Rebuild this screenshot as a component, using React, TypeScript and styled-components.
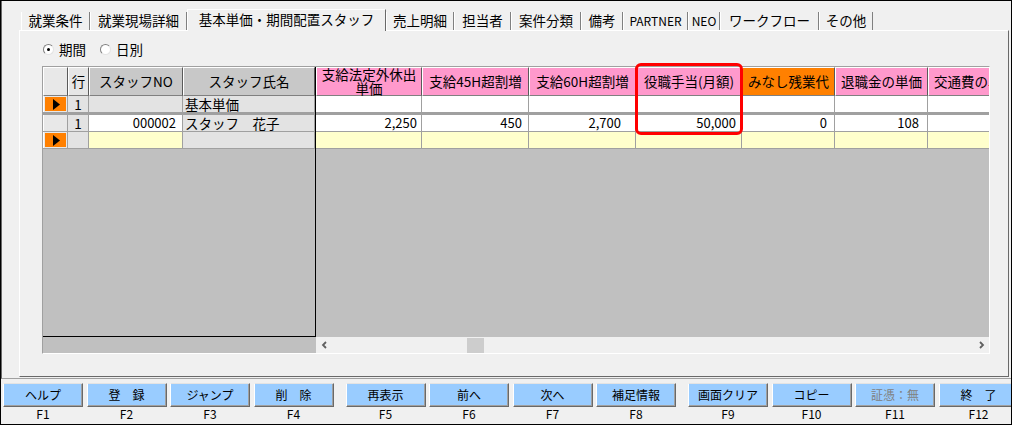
import styled, { createGlobalStyle } from 'styled-components'

const PINK = '#ff99cc'
const ORANGE = '#ff8000'
const GRAY_CELL = '#e3e3e3'
const YELLOW = '#ffffcc'

const GlobalStyle = createGlobalStyle`
  html, body {
    margin: 0;
    padding: 0;
    background: #ffffff;
  }
  body {
    font-family: "Noto Sans CJK JP", "Liberation Sans", sans-serif;
    font-size: 13.5px;
    color: #000;
  }
  * {
    box-sizing: border-box;
  }
`

const Window = styled.div`
  width: 1012px;
  height: 425px;
  border: 1px solid #000;
  background: #f0f0f0;
  display: flex;
  flex-direction: column;
  overflow: hidden;
`

const TopFrame = styled.div`
  height: 378px;
  flex-shrink: 0;
  border-left: 1px solid #696969;
  border-bottom: 1px solid #a0a0a0;
  padding-left: 17px;
  display: flex;
  flex-direction: column;
`

const TabStrip = styled.div`
  height: 29px;
  display: flex;
  align-items: flex-end;
  padding-left: 2px;
`

const Tab = styled.div<{ $w: number; $active?: boolean; $latin?: boolean }>`
  width: ${(p) => p.$w}px;
  height: ${(p) => (p.$active ? 22 : 18)}px;
  margin-bottom: ${(p) => (p.$active ? -1 : 0)}px;
  position: relative;
  z-index: ${(p) => (p.$active ? 1 : 0)};
  background: #f0f0f0;
  border-left: 1px solid #ffffff;
  border-right: 1px solid ${(p) => (p.$active ? '#696969' : '#808080')};
  border-top: ${(p) => (p.$active ? '1px solid #ffffff' : 'none')};
  display: flex;
  align-items: center;
  justify-content: center;
  white-space: nowrap;
  font-size: ${(p) => (p.$latin ? 12 : 13.5)}px;
  line-height: 1;
  padding-bottom: ${(p) => (p.$active ? 2 : 0)}px;
`

const Panel = styled.div`
  width: 990px;
  height: 347px;
  border: 1px solid;
  border-color: #ffffff #696969 #696969 #ffffff;
  padding: 9px 0 0 22px;
  display: flex;
  flex-direction: column;
`

const RadioRow = styled.div`
  height: 19px;
  display: flex;
  align-items: center;
  gap: 14px;
  padding-left: 1px;
`

const RadioItem = styled.label`
  display: flex;
  align-items: center;
  gap: 5px;
  line-height: 1;
`

const RadioDot = styled.span<{ $checked?: boolean }>`
  width: 11px;
  height: 11px;
  border-radius: 50%;
  border: 1px solid;
  border-color: #808080 #e3e3e3 #e3e3e3 #808080;
  background: #ffffff;
  display: flex;
  align-items: center;
  justify-content: center;

  &::after {
    content: '';
    width: 3px;
    height: 3px;
    border-radius: 50%;
    background: ${(p) => (p.$checked ? '#000' : 'transparent')};
  }
`

const Grid = styled.div`
  margin-top: 7px;
  width: 948px;
  height: 288px;
  border: 1px solid;
  border-color: #a0a0a0 #ffffff #ffffff #a0a0a0;
  background: #c0c0c0;
  position: relative;
  display: flex;
  flex-direction: column;
`

const GridBody = styled.div`
  height: 270px;
  flex-shrink: 0;
  display: flex;
`

const FrozenPane = styled.div`
  width: 273px;
  flex-shrink: 0;
  border-right: 1px solid #000;
  border-bottom: 1px solid #000;
  display: flex;
  flex-direction: column;
`

const ScrollPane = styled.div`
  flex: 1;
  min-width: 0;
  overflow: hidden;
  display: flex;
  flex-direction: column;
`

const HeaderRow = styled.div`
  height: 29px;
  flex-shrink: 0;
  display: flex;
`

const HeadCell = styled.div<{ $w: number; $bg: string }>`
  width: ${(p) => p.$w}px;
  flex-shrink: 0;
  background: ${(p) => p.$bg};
  border-top: 1px solid #ffffff;
  border-left: 1px solid #ffffff;
  border-right: 1px solid #5a5a5a;
  border-bottom: 1px solid #808080;
  display: flex;
  align-items: center;
  justify-content: center;
  text-align: center;
  white-space: nowrap;
  line-height: 13.5px;
`

const HeadLines = styled.span`
  display: flex;
  flex-direction: column;
  align-items: center;
`

const DataRow = styled.div<{ $thick?: boolean }>`
  height: ${(p) => (p.$thick ? 19 : 17)}px;
  flex-shrink: 0;
  display: flex;
  border-bottom: ${(p) => (p.$thick ? 3 : 1)}px solid #a0a0a0;
`

const Cell = styled.div<{ $w: number; $bg: string; $align?: 'left' | 'right' | 'center'; $pr?: number }>`
  width: ${(p) => p.$w}px;
  flex-shrink: 0;
  height: 100%;
  background: ${(p) => p.$bg};
  border-right: 1px solid #a0a0a0;
  display: flex;
  align-items: center;
  justify-content: ${(p) => (p.$align === 'right' ? 'flex-end' : p.$align === 'center' ? 'center' : 'flex-start')};
  padding: 0 ${(p) => p.$pr ?? 5}px 0 2px;
  white-space: nowrap;
  line-height: 14px;
`

const NumText = styled.span`
  font-size: 13px;
`

const SelectorCell = styled.div`
  width: 25px;
  flex-shrink: 0;
  height: 100%;
  background: #e8e8e8;
  border-right: 1px solid #a0a0a0;
  border-left: 1px solid #ffffff;
  padding: 1px;
  display: flex;
`

const Marker = styled.div`
  flex: 1;
  background: ${ORANGE};
  display: flex;
  align-items: center;
  justify-content: center;
  padding-left: 2px;
`

const HScroll = styled.div`
  height: 16px;
  flex-shrink: 0;
  display: flex;
`

const ScrollSpacer = styled.div`
  width: 273px;
  flex-shrink: 0;
  background: #c0c0c0;
`

const ScrollTrack = styled.div`
  flex: 1;
  background: #f0f0f0;
  display: flex;
  align-items: center;
`

const ArrowBtn = styled.div`
  width: 16px;
  height: 16px;
  flex-shrink: 0;
  display: flex;
  align-items: center;
  justify-content: center;
`

const Thumb = styled.div<{ $offset: number }>`
  width: 17px;
  height: 15px;
  margin-left: ${(p) => p.$offset}px;
  background: #cdcdcd;
`

const TrackFill = styled.div`
  flex: 1;
`

const Highlight = styled.div`
  position: absolute;
  left: 592px;
  top: -4px;
  width: 108px;
  height: 72px;
  border: 3px solid #ff0000;
  border-radius: 6px;
  pointer-events: none;
`

const ButtonBar = styled.div`
  display: flex;
  gap: 12px;
  padding: 4px 0 0 2px;
`

const KeyGroup = styled.div`
  display: flex;
  gap: 3.5px;
`

const KeySlot = styled.div`
  width: 80px;
  flex-shrink: 0;
  display: flex;
  flex-direction: column;
  align-items: center;
`

const FButton = styled.div<{ $disabled?: boolean }>`
  width: 80px;
  height: 24px;
  background: #99ccff;
  border: 1px solid;
  border-color: #e3e3e3 #696969 #696969 #ffffff;
  box-shadow: inset -1px -1px 0 #a0a0a0;
  display: flex;
  align-items: center;
  justify-content: center;
  font-size: 12px;
  line-height: 1;
  white-space: nowrap;
  color: ${(p) => (p.$disabled ? '#808080' : '#000')};
`

const FLabel = styled.div`
  height: 14px;
  font-size: 12px;
  line-height: 14px;
`

const tabs = [
  { label: '就業条件', w: 69 },
  { label: '就業現場詳細', w: 97 },
  { label: '基本単価・期間配置スタッフ', w: 199, active: true },
  { label: '売上明細', w: 68 },
  { label: '担当者', w: 57 },
  { label: '案件分類', w: 70 },
  { label: '備考', w: 42 },
  { label: 'PARTNER', w: 65, latin: true },
  { label: 'NEO', w: 32, latin: true },
  { label: 'ワークフロー', w: 99 },
  { label: 'その他', w: 54 },
]

const scrollCols = [
  { label: ['支給法定外休出', '単価'], w: 106, bg: PINK },
  { label: ['支給45H超割増'], w: 107, bg: PINK },
  { label: ['支給60H超割増'], w: 107, bg: PINK },
  { label: ['役職手当(月額)'], w: 106, bg: PINK },
  { label: ['みなし残業代'], w: 93, bg: ORANGE },
  { label: ['退職金の単価'], w: 93, bg: PINK },
  { label: ['交通費の単価'], w: 93, bg: PINK },
]

// value + right padding per cell (the old grid aligns amounts unevenly)
const amountRow: [string, number][] = [
  ['2,250', 4],
  ['450', 6],
  ['2,700', 14],
  ['50,000', 5],
  ['0', 7],
  ['108', 8],
  ['', 5],
]

const keyGroups = [
  [
    { text: 'ヘルプ', key: 'F1' },
    { text: '登　録', key: 'F2' },
    { text: 'ジャンプ', key: 'F3' },
    { text: '削　除', key: 'F4' },
  ],
  [
    { text: '再表示', key: 'F5' },
    { text: '前へ', key: 'F6' },
    { text: '次へ', key: 'F7' },
    { text: '補足情報', key: 'F8' },
  ],
  [
    { text: '画面クリア', key: 'F9' },
    { text: 'コピー', key: 'F10' },
    { text: '証憑：無', key: 'F11', disabled: true },
    { text: '終　了', key: 'F12' },
  ],
]

function RowMarker() {
  return (
    <Marker>
      <svg width="7" height="11" viewBox="0 0 7 11">
        <polygon points="0,0 7,5.5 0,11" fill="#000" />
      </svg>
    </Marker>
  )
}

function Chevron({ dir }: { dir: 'left' | 'right' }) {
  const d = dir === 'left' ? 'M5 1 L2 4 L5 7' : 'M2 1 L5 4 L2 7'
  return (
    <svg width="7" height="8" viewBox="0 0 7 8">
      <path d={d} stroke="#606060" strokeWidth="1.8" fill="none" />
    </svg>
  )
}

export default function App() {
  return (
    <>
      <GlobalStyle />
      <Window>
        <TopFrame>
          <TabStrip>
            {tabs.map((t) => (
              <Tab key={t.label} $w={t.w} $active={t.active} $latin={t.latin}>
                {t.label}
              </Tab>
            ))}
          </TabStrip>
          <Panel>
            <RadioRow>
              <RadioItem>
                <RadioDot $checked />
                期間
              </RadioItem>
              <RadioItem>
                <RadioDot />
                日別
              </RadioItem>
            </RadioRow>

            <Grid>
              <GridBody>
                <FrozenPane>
                  <HeaderRow>
                    <HeadCell $w={25} $bg="#e8e8e8" />
                    <HeadCell $w={21} $bg="#e6e6e6">行</HeadCell>
                    <HeadCell $w={94} $bg="#c8c8c8">スタッフNO</HeadCell>
                    <HeadCell $w={132} $bg="#c8c8c8">スタッフ氏名</HeadCell>
                  </HeaderRow>
                  <DataRow $thick>
                    <SelectorCell>
                      <RowMarker />
                    </SelectorCell>
                    <Cell $w={21} $bg={GRAY_CELL} $align="center" $pr={2}>1</Cell>
                    <Cell $w={94} $bg={GRAY_CELL} />
                    <Cell $w={132} $bg={GRAY_CELL}>基本単価</Cell>
                  </DataRow>
                  <DataRow>
                    <SelectorCell />
                    <Cell $w={21} $bg={GRAY_CELL} $align="center" $pr={2}>1</Cell>
                    <Cell $w={94} $bg="#ffffff" $align="right" $pr={6}>
                      <NumText>000002</NumText>
                    </Cell>
                    <Cell $w={132} $bg={GRAY_CELL}>スタッフ　花子</Cell>
                  </DataRow>
                  <DataRow>
                    <SelectorCell>
                      <RowMarker />
                    </SelectorCell>
                    <Cell $w={21} $bg={GRAY_CELL} />
                    <Cell $w={94} $bg={YELLOW} />
                    <Cell $w={132} $bg={GRAY_CELL} />
                  </DataRow>
                </FrozenPane>

                <ScrollPane>
                  <HeaderRow>
                    {scrollCols.map((c) => (
                      <HeadCell key={c.label.join('')} $w={c.w} $bg={c.bg}>
                        <HeadLines>
                          {c.label.map((line) => (
                            <span key={line}>{line}</span>
                          ))}
                        </HeadLines>
                      </HeadCell>
                    ))}
                  </HeaderRow>
                  <DataRow $thick>
                    {scrollCols.map((c) => (
                      <Cell key={c.label.join('')} $w={c.w} $bg="#ffffff" />
                    ))}
                  </DataRow>
                  <DataRow>
                    {scrollCols.map((c, i) => (
                      <Cell key={c.label.join('')} $w={c.w} $bg="#ffffff" $align="right" $pr={amountRow[i][1]}>
                        <NumText>{amountRow[i][0]}</NumText>
                      </Cell>
                    ))}
                  </DataRow>
                  <DataRow>
                    {scrollCols.map((c) => (
                      <Cell key={c.label.join('')} $w={c.w} $bg={YELLOW} />
                    ))}
                  </DataRow>
                </ScrollPane>
              </GridBody>

              <HScroll>
                <ScrollSpacer />
                <ScrollTrack>
                  <ArrowBtn>
                    <Chevron dir="left" />
                  </ArrowBtn>
                  <Thumb $offset={135} />
                  <TrackFill />
                  <ArrowBtn>
                    <Chevron dir="right" />
                  </ArrowBtn>
                </ScrollTrack>
              </HScroll>

              <Highlight />
            </Grid>
          </Panel>
        </TopFrame>

        <ButtonBar>
          {keyGroups.map((group, gi) => (
            <KeyGroup key={gi}>
              {group.map((k) => (
                <KeySlot key={k.key}>
                  <FButton $disabled={k.disabled}>{k.text}</FButton>
                  <FLabel>{k.key}</FLabel>
                </KeySlot>
              ))}
            </KeyGroup>
          ))}
        </ButtonBar>
      </Window>
    </>
  )
}
